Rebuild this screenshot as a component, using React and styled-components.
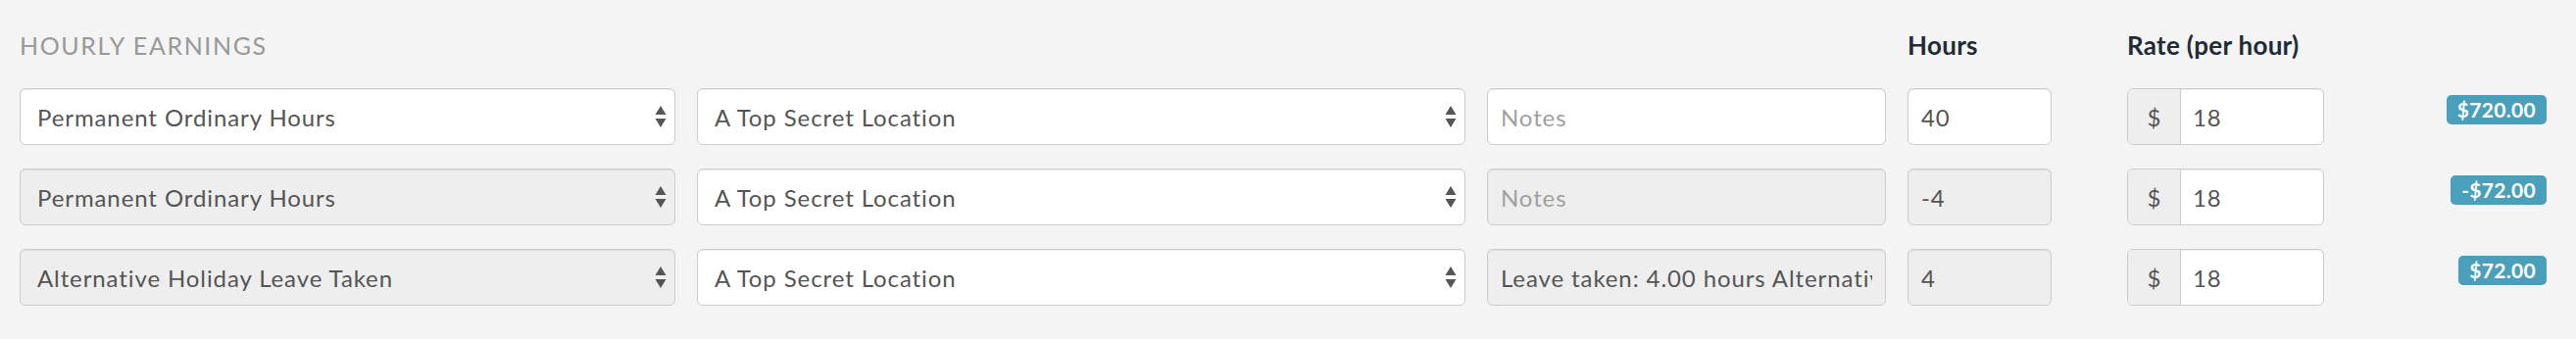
import { createGlobalStyle, styled } from "styled-components";

const GlobalStyle = createGlobalStyle`
  body {
    margin: 0;
    background: #f4f4f4;
    font-family: Lato, "Open Sans", sans-serif;
  }
`;

const EarningsGrid = styled.section`
  display: grid;
  grid-template-columns: 669px 784px 407px 202px 201px 1fr;
  grid-template-rows: 66px repeat(3, 58px);
  column-gap: 22px;
  row-gap: 24px;
  padding: 0 30px 0 20px;
  height: 346px;
  box-sizing: border-box;
`;

const SectionTitle = styled.div`
  padding-top: 31px;
  line-height: 30px;
  font-size: 25px;
  letter-spacing: 1.6px;
  color: #999;
  text-transform: uppercase;
`;

const ColumnTitle = styled.div`
  padding-top: 31px;
  line-height: 30px;
  font-size: 26px;
  font-weight: 700;
  letter-spacing: 0.3px;
  color: #1f2b38;
`;

const SelectWrap = styled.div`
  position: relative;
`;

const fieldBase = `
  box-sizing: border-box;
  width: 100%;
  height: 58px;
  border: 1px solid #ccc;
  border-radius: 6px;
  font-family: Lato, "Open Sans", sans-serif;
  font-size: 24px;
  letter-spacing: 0.9px;
  color: #555;
  outline: none;
  box-shadow: inset 0 1px 1px rgba(0, 0, 0, 0.075);
`;

const Select = styled.select`
  ${fieldBase}
  appearance: none;
  padding: 0 40px 0 17px;
  background: ${(p) => (p.disabled ? "#eee" : "#fff")};
  &:disabled {
    color: #555;
    opacity: 1;
  }
`;

const Arrows = styled.svg`
  position: absolute;
  right: 9px;
  top: 50%;
  margin-top: -11px;
  pointer-events: none;
`;

const Input = styled.input`
  ${fieldBase}
  padding: 0 13px;
  background: ${(p) => (p.disabled ? "#eee" : "#fff")};
  &:disabled {
    color: #555;
    -webkit-text-fill-color: #555;
    opacity: 1;
  }
  &::placeholder {
    color: #a0a0a0;
    -webkit-text-fill-color: #a0a0a0;
  }
`;

const HoursInput = styled(Input)`
  width: 147px;
`;

const InputGroup = styled.div`
  display: flex;
  height: 58px;
  box-sizing: border-box;
  border: 1px solid #ccc;
  border-radius: 6px;
  overflow: hidden;
  background: #fff;
  box-shadow: inset 0 1px 1px rgba(0, 0, 0, 0.075);
`;

const Addon = styled.span`
  display: flex;
  align-items: center;
  justify-content: center;
  width: 53px;
  flex-shrink: 0;
  background: #eee;
  border-right: 1px solid #ccc;
  font-size: 24px;
  color: #555;
`;

const GroupInput = styled.input`
  flex: 1;
  min-width: 0;
  border: none;
  outline: none;
  padding: 0 12px;
  font-family: Lato, "Open Sans", sans-serif;
  font-size: 24px;
  letter-spacing: 0.9px;
  color: #555;
  background: transparent;
`;

const BadgeCell = styled.div`
  justify-self: end;
  align-self: center;
  margin-top: -14px;
`;

const Badge = styled.span`
  display: inline-block;
  padding: 4px 11px;
  line-height: 22px;
  border-radius: 5px;
  background: #4aa0bb;
  color: #fff;
  font-size: 21px;
  font-weight: 700;
  letter-spacing: 0.3px;
`;

const rows = [
  { type: "Permanent Ordinary Hours", locked: false, notes: "", hours: "40", rate: "18", total: "$720.00" },
  { type: "Permanent Ordinary Hours", locked: true, notes: "", hours: "-4", rate: "18", total: "-$72.00" },
  {
    type: "Alternative Holiday Leave Taken",
    locked: true,
    notes: "Leave taken: 4.00 hours Alternative Holiday Leave Taken",
    hours: "4",
    rate: "18",
    total: "$72.00",
  },
];

function UpDown() {
  return (
    <Arrows width="12" height="22" viewBox="0 0 12 22">
      <path d="M6 0 L11.5 9 L0.5 9 Z" fill="#555" />
      <path d="M0.5 13 L11.5 13 L6 22 Z" fill="#555" />
    </Arrows>
  );
}

function SelectField({ value, disabled }) {
  return (
    <SelectWrap>
      <Select value={value} disabled={disabled} onChange={() => {}}>
        <option>{value}</option>
      </Select>
      <UpDown />
    </SelectWrap>
  );
}

export default function App() {
  return (
    <>
      <GlobalStyle />
      <EarningsGrid>
        <SectionTitle>Hourly Earnings</SectionTitle>
        <div />
        <div />
        <ColumnTitle>Hours</ColumnTitle>
        <ColumnTitle>Rate (per hour)</ColumnTitle>
        <div />

        {rows.map((row, i) => (
          <>
            <SelectField key={`t${i}`} value={row.type} disabled={row.locked} />
            <SelectField key={`l${i}`} value="A Top Secret Location" />
            <Input key={`n${i}`} placeholder="Notes" defaultValue={row.notes} disabled={row.locked} />
            <div key={`h${i}`}>
              <HoursInput defaultValue={row.hours} disabled={row.locked} />
            </div>
            <InputGroup key={`r${i}`}>
              <Addon>$</Addon>
              <GroupInput defaultValue={row.rate} />
            </InputGroup>
            <BadgeCell key={`b${i}`}>
              <Badge>{row.total}</Badge>
            </BadgeCell>
          </>
        ))}
      </EarningsGrid>
    </>
  );
}
